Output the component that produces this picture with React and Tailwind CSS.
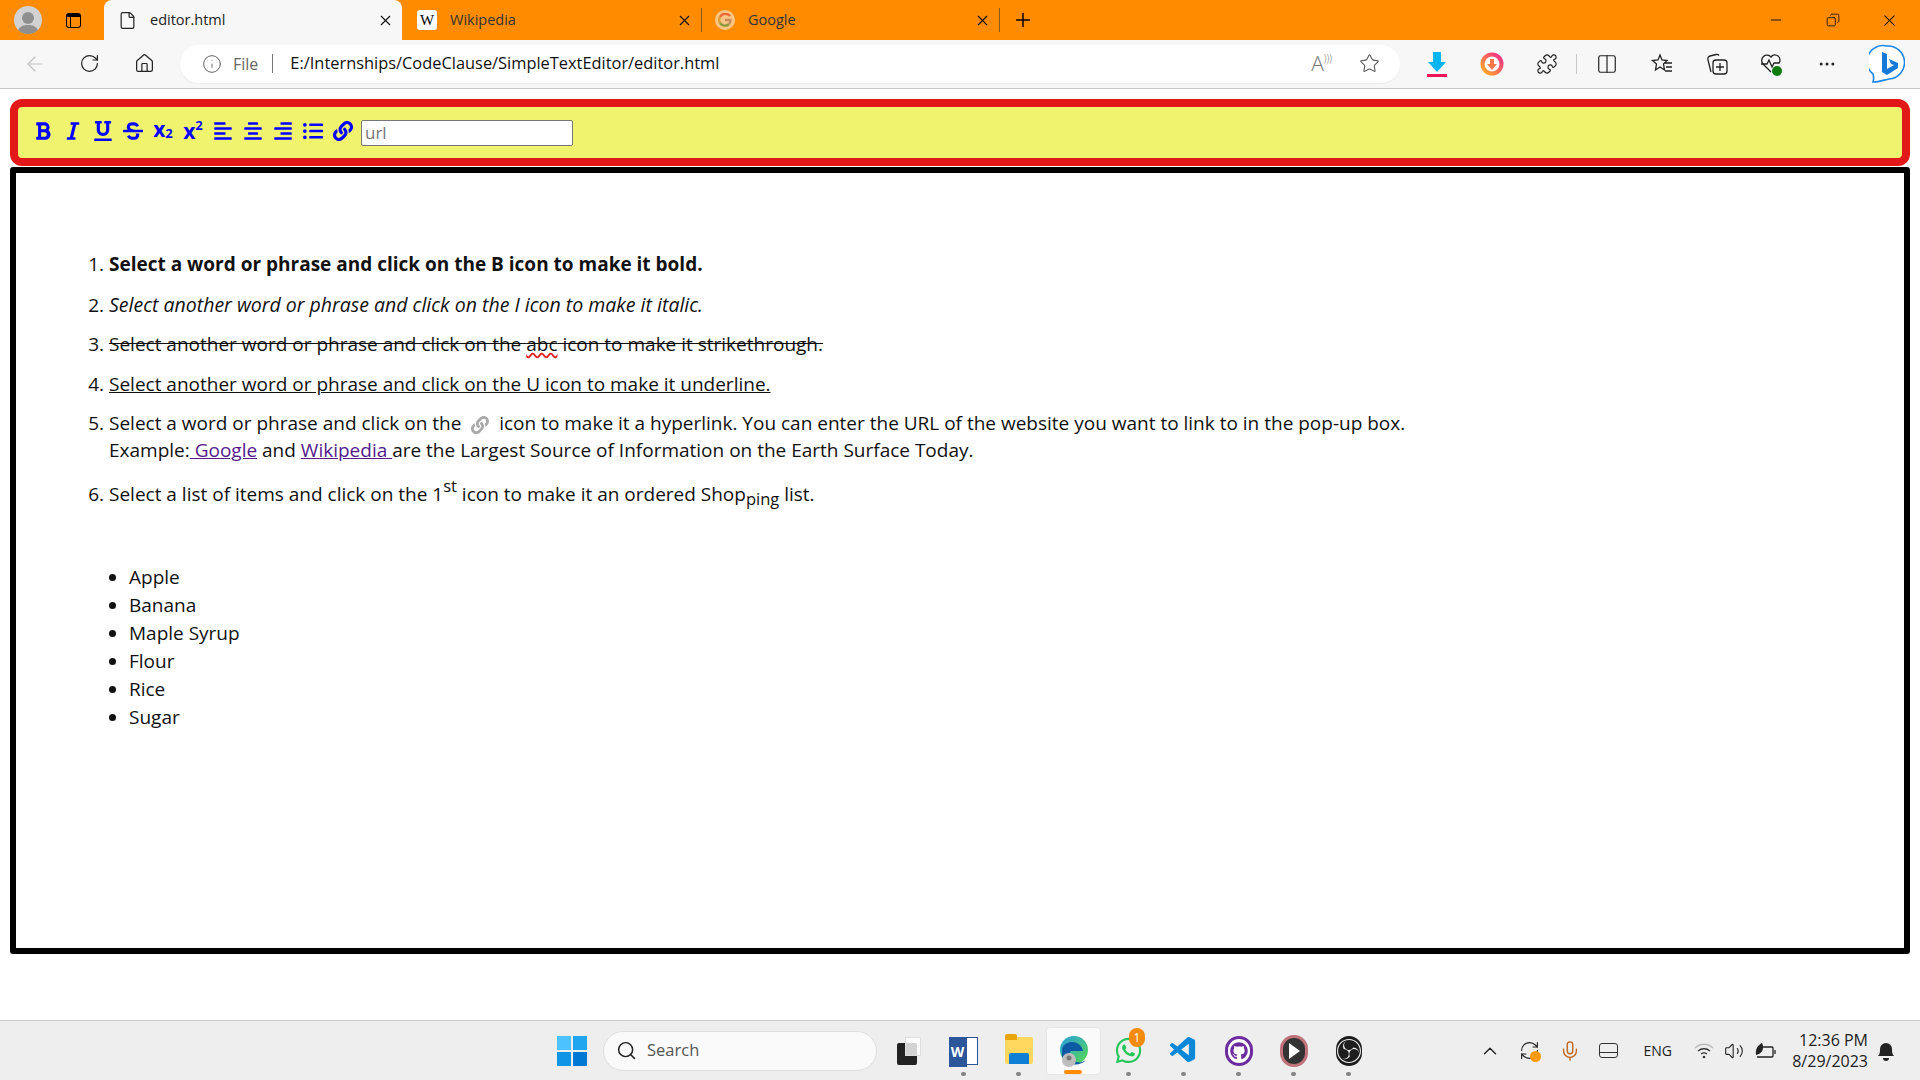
import React from "react";
import {
  FaBold, FaItalic, FaUnderline, FaStrikethrough,
  FaAlignLeft, FaAlignCenter, FaAlignRight, FaListUl, FaLink, FaWhatsapp, FaGithub,
} from "react-icons/fa";
import { SiObsstudio } from "react-icons/si";
import { VscVscode } from "react-icons/vsc";
import {
  ArrowLeft, RotateCw, Home, Info, Star, Puzzle, Columns2, X, Plus, Minus, File, Ellipsis,
  Search, ChevronUp, RefreshCw, Mic, Volume2, Copy,
} from "lucide-react";

const toolsBefore = [FaBold, FaItalic, FaUnderline, FaStrikethrough];
const toolsAfter = [FaAlignLeft, FaAlignCenter, FaAlignRight, FaListUl, FaLink];

function Tab({ icon, title, active, width }) {
  return (
    <div className={`h-full flex items-center pr-[8px] shrink-0 ${width} ${active ? "bg-[#f7f7f7] rounded-t-[8px] text-[#222]" : "text-[#333]"}`}>
      <span className="w-[24px] h-[24px] flex items-center justify-center shrink-0">{icon}</span>
      <span className="ml-[11px] flex-1 text-[14.5px]">{title}</span>
      <X size={17} strokeWidth={1.6} className="text-[#111]" />
    </div>
  );
}

function BarIcon({ children, w = "w-[55px]" }) {
  return <div className={`${w} h-[32px] flex items-center justify-center shrink-0 text-[#222]`}>{children}</div>;
}

function TaskIcon({ children, dot = true, active }) {
  return (
    <div className={`relative w-[55px] h-[48px] flex items-center justify-center shrink-0 rounded-[4px] ${active ? "bg-[#fafafa] border border-[#e6e6e6]" : ""}`}>
      {children}
      {dot && !active && <span className="absolute bottom-[-1px] left-[25px] w-[5px] h-[4px] rounded-full bg-[#858585]" />}
      {active && <span className="absolute bottom-[0px] left-[17px] w-[18px] h-[4px] rounded-full bg-[#ff8c00]" />}
    </div>
  );
}

function Bing() {
  return (
    <svg width="36" height="40" viewBox="0 0 36 40">
      <path d="M18 2a16 16 0 0 1 2 33c-5 1-10 3-16 3 1-3 1-5 0-8A16 16 0 0 1 18 2z" fill="#fff" stroke="#1a86e8" strokeWidth="1.6" />
      <path d="M13 8l5 2v15l7-4-3-1-2-5 9 4v5l-11 7-5-3z" fill="#1479d8" />
    </svg>
  );
}

function WinLogo() {
  return (
    <svg width="30" height="30" viewBox="0 0 30 30">
      <rect x="0" y="0" width="14" height="14" fill="#4cc2ff" />
      <rect x="16" y="0" width="14" height="14" fill="#1fa6ee" />
      <rect x="0" y="16" width="14" height="14" fill="#1094e6" />
      <rect x="16" y="16" width="14" height="14" fill="#0078d4" />
    </svg>
  );
}

function GoogleFav() {
  return (
    <span className="w-[20px] h-[20px] rounded-full bg-[#fbc685] flex items-center justify-center">
      <svg width="14" height="14" viewBox="0 0 14 14" fill="none" strokeWidth="2.4">
        <path d="M12 3A6 6 0 0 0 2 4" stroke="#e8683a" />
        <path d="M2 4a6 6 0 0 0 0 6" stroke="#d9a030" />
        <path d="M2 10a6 6 0 0 0 9 1" stroke="#8d9a3a" />
        <path d="M11 11c1-1 1.500-2.500 1.500-4H7" stroke="#c98a5a" />
      </svg>
    </span>
  );
}

function App() {
  return (
    <div className="w-[1920px] h-[1080px] overflow-hidden bg-white flex flex-col font-['Open_Sans',sans-serif] text-black">
      {/* tab strip */}
      <div className="h-[40px] bg-[#ff8c00] flex items-center shrink-0 pl-[14px]">
        <div className="w-[28px] h-[28px] rounded-full bg-[#d2d2d2] flex flex-col items-center justify-end overflow-hidden shrink-0">
          <span className="w-[12px] h-[12px] rounded-full bg-[#8f8f8f] mb-[1px]" />
          <span className="w-[22px] h-[9px] rounded-t-full bg-[#8f8f8f]" />
        </div>
        <div className="w-[62px] flex justify-center shrink-0">
          <div className="w-[15px] h-[15px] border-[1.5px] border-black rounded-[3px] border-t-[4px] flex bg-[#ff8c00]">
            <span className="w-[4px] border-r-[1.5px] border-black" />
          </div>
        </div>
        <Tab width="w-[298px] pl-[11px]" active title="editor.html" icon={<File size={19} strokeWidth={1.5} />} />
        <Tab
          width="w-[299px] pl-[13px]"
          title="Wikipedia"
          icon={<span className="w-[20px] h-[20px] bg-white rounded-[3px] flex items-center justify-center font-['Liberation_Serif',serif] text-[15px] text-black">W</span>}
        />
        <span className="w-[1px] h-[24px] bg-[#8a5a1e] shrink-0" />
        <Tab width="w-[297px] pl-[11px]" title="Google" icon={<GoogleFav />} />
        <span className="w-[1px] h-[24px] bg-[#8a5a1e] shrink-0" />
        <Plus size={22} strokeWidth={1.6} className="ml-[12px] text-black" />
        <div className="ml-auto flex items-center shrink-0 pr-[2px]">
          <BarIcon w="w-[57px]"><Minus size={16} strokeWidth={1.3} className="text-black" /></BarIcon>
          <BarIcon w="w-[57px]"><Copy size={14} strokeWidth={1.3} className="text-black -scale-x-100" /></BarIcon>
          <BarIcon w="w-[57px]"><X size={19} strokeWidth={1.3} className="text-black" /></BarIcon>
        </div>
      </div>

      {/* address bar */}
      <div className="h-[49px] bg-[#f7f7f7] border-b border-[#c8c8c8] flex items-center shrink-0 pl-[7px] pb-[1px]">
        <BarIcon><ArrowLeft size={24} strokeWidth={1.2} className="text-[#c4c4c4]" /></BarIcon>
        <BarIcon><RotateCw size={21} strokeWidth={1.4} /></BarIcon>
        <BarIcon><Home size={21} strokeWidth={1.4} /></BarIcon>
        <div className="ml-[8px] w-[1220px] h-[38px] bg-white rounded-full flex items-center pl-[22px] pr-[12px] shrink-0 shadow-[0_1px_2px_rgba(0,0,0,0.05)]">
          <Info size={20} strokeWidth={1.2} className="text-[#666]" />
          <span className="ml-[11px] text-[16px] text-[#666]">File</span>
          <span className="ml-[14px] w-[1px] h-[19px] bg-[#777]" />
          <span className="ml-[17px] text-[16.4px] text-[#111]">E:/Internships/CodeClause/SimpleTextEditor/editor.html</span>
          <span className="ml-auto text-[21px] leading-none text-[#777] font-light mr-[27px]">A<span className="text-[10px] align-top">)))</span></span>
          <Star size={21} strokeWidth={1.2} className="text-[#555] mr-[8px]" />
        </div>
        <div className="ml-[9px] flex items-center">
          <BarIcon>
            <svg width="22" height="28" viewBox="0 0 22 28">
              <path d="M7 2h8v10h5l-9 10-9-10h5z" fill="#06b6f2" />
              <rect x="1" y="24" width="20" height="3" fill="#f0145a" />
            </svg>
          </BarIcon>
          <BarIcon>
            <svg width="24" height="24" viewBox="0 0 24 24">
              <defs>
                <linearGradient id="ring" x1="0" y1="1" x2="1" y2="0">
                  <stop offset="0" stopColor="#ffb020" />
                  <stop offset="1" stopColor="#f0288c" />
                </linearGradient>
              </defs>
              <circle cx="12" cy="12" r="9.5" fill="#fff" stroke="url(#ring)" strokeWidth="4" />
              <path d="M10 7h4v5h3l-5 6-5-6h3z" fill="#f4774a" />
            </svg>
          </BarIcon>
          <BarIcon><Puzzle size={22} strokeWidth={1.3} /></BarIcon>
          <span className="w-[1px] h-[20px] bg-[#c8c8c8] mx-[2px]" />
          <BarIcon><Columns2 size={22} strokeWidth={1.3} /></BarIcon>
          <BarIcon>
            <svg width="24" height="24" viewBox="0 0 24 24" fill="none" stroke="#222" strokeWidth="1.3">
              <path d="M10 3l2 5 5 .5-3.5 3.5 1 6-4.5-3-4.500 3 1-6L2.500 8.500 8 8z" />
              <path d="M15 11h7M16 15h6M15 19h7" />
            </svg>
          </BarIcon>
          <BarIcon>
            <svg width="24" height="24" viewBox="0 0 24 24" fill="none" stroke="#222" strokeWidth="1.3">
              <path d="M6 20L3 8a3 3 0 0 1 2-4l6-1.500a3 3 0 0 1 3 1" />
              <rect x="8" y="8" width="14" height="14" rx="3" />
              <path d="M15 11v8M11 15h8" />
            </svg>
          </BarIcon>
          <BarIcon>
            <svg width="26" height="26" viewBox="0 0 26 26" fill="none" stroke="#222" strokeWidth="1.3">
              <path d="M12 21L4 13a5 5 0 0 1 8-7 5 5 0 0 1 9 3c0 1.500-.5 2.500-1 3.500" />
              <path d="M2 13h6l2-4 3 7 2-4h5" />
              <circle cx="18" cy="20" r="5" fill="#107c10" stroke="none" />
            </svg>
          </BarIcon>
          <BarIcon><Ellipsis size={20} strokeWidth={1.6} /></BarIcon>
          <div className="w-[65px] flex justify-center shrink-0"><Bing /></div>
        </div>
      </div>

      {/* page */}
      <div className="flex-1 px-[10px] pt-[10px] flex flex-col">
        <div className="h-[67px] border-[8px] border-[#e21717] rounded-[12px] bg-[#f0f36e] flex items-center pl-[10px] shrink-0">
          <div className="flex items-center h-full pb-[3px]">
            {toolsBefore.map((Tool, i) => (
              <div key={i} className="w-[30px] flex justify-center shrink-0">
                <Tool size={20} color="#0000ff" />
              </div>
            ))}
            <div className="w-[30px] flex justify-center shrink-0 font-bold text-[#0000ff] text-[21px] leading-none mt-[-3px]">
              x<span className="text-[13px] font-bold mt-[8px]">2</span>
            </div>
            <div className="w-[30px] flex justify-center shrink-0 font-bold text-[#0000ff] text-[21px] leading-none">
              x<span className="text-[13px] font-bold mt-[-2px]">2</span>
            </div>
            {toolsAfter.map((Tool, i) => (
              <div key={i} className="w-[30px] flex justify-center shrink-0">
                <Tool size={20} color="#0000ff" />
              </div>
            ))}
          </div>
          <input
            placeholder="url"
            className="ml-[3px] w-[212px] h-[26px] bg-white border border-[#767676] rounded-[2px] px-[3px] text-[17px] placeholder:text-[#757575] outline-none"
          />
        </div>

        <div className="mt-[1px] h-[787px] border-[6px] border-black rounded-[3px] shrink-0 pt-[78px] pl-[93px] text-[19px] leading-[27px] text-[#111]">
          <ol className="list-decimal w-[1440px]">
            <li className="mb-[12.500px]"><span className="font-bold">Select a word or phrase and click on the B icon to make it bold.</span></li>
            <li className="mb-[12.500px]"><span className="italic text-[19.500px]">Select another word or phrase and click on the I icon to make it italic.</span></li>
            <li className="mb-[12.500px]">
              <span className="line-through">
                Select another word or phrase and click on the <span className="underline decoration-wavy decoration-[#e02020]">abc</span> icon to make it strikethrough.
              </span>
            </li>
            <li className="mb-[12.500px]"><span className="underline">Select another word or phrase and click on the U icon to make it underline.</span></li>
            <li className="mb-[16.500px]">
              Select a word or phrase and click on the <FaLink size={18} className="inline mx-[5px] text-[#aaa]" /> icon to make it a hyperlink. You can enter the URL of the website you want to link to in the pop-up box.
              <br />
              Example:<span className="underline text-[#551a8b]"> Google</span> and <span className="underline text-[#551a8b]">Wikipedia </span>are the Largest Source of Information on the Earth Surface Today.
            </li>
            <li>
              Select a list of items and click on the 1<sup className="text-[16.500px]">st</sup> icon to make it an ordered Shop<sub className="text-[16.500px]">ping</sub> list.
            </li>
          </ol>
          <ul className="list-disc mt-[55px] ml-[20px] leading-[28px]">
            <li>Apple</li>
            <li>Banana</li>
            <li>Maple Syrup</li>
            <li>Flour</li>
            <li>Rice</li>
            <li>Sugar</li>
          </ul>
        </div>
      </div>

      {/* taskbar */}
      <div className="h-[60px] bg-[#eeeeee] border-t border-[#c9c9c9] flex items-center shrink-0 pl-[557px] relative">
        <WinLogo />
        <div className="ml-[16px] w-[274px] h-[40px] bg-[#fafafa] rounded-full border border-[#dedede] flex items-center pl-[12px] shrink-0">
          <Search size={21} strokeWidth={1.7} className="text-[#222]" />
          <span className="ml-[10px] text-[16.500px] text-[#555]">Search</span>
        </div>
        <div className="ml-[4px] flex items-center">
          <TaskIcon dot={false}>
            <span className="relative w-[24px] h-[28px]">
              <span className="absolute left-0 bottom-0 w-[20px] h-[22px] bg-[#222] rounded-[2px]" />
              <span className="absolute right-0 top-0 w-[16px] h-[19px] bg-white/80 border border-[#ddd]" />
            </span>
          </TaskIcon>
          <TaskIcon>
            <span className="relative w-[28px] h-[28px] bg-white border border-[#2b579a]">
              <span className="absolute left-[-2px] top-[-1px] w-[18px] h-[30px] bg-[#2b579a] text-white text-[14px] font-bold leading-[30px] text-center">W</span>
            </span>
          </TaskIcon>
          <TaskIcon>
            <span className="relative w-[28px] h-[27px] bg-[#ffd75e] rounded-[2px]">
              <span className="absolute left-0 top-[-3px] w-[12px] h-[6px] bg-[#e8a60c] rounded-t-[2px]" />
              <span className="absolute left-[4px] bottom-0 w-[20px] h-[11px] bg-[#0e7fd4] rounded-t-[2px]" />
            </span>
          </TaskIcon>
          <TaskIcon active>
            <svg width="30" height="32" viewBox="0 0 30 32">
              <defs>
                <linearGradient id="edge" x1="0" y1="0" x2="1" y2="1">
                  <stop offset="0" stopColor="#2a9ee0" />
                  <stop offset="1" stopColor="#57d94d" />
                </linearGradient>
              </defs>
              <circle cx="15" cy="15" r="14" fill="url(#edge)" />
              <path d="M3 14C6 4 22 5 24 16H12c-3 2-2 9 6 11 3 1 6 0 9-2-5 6-18 7-24-3z" fill="#0c59a4" />
              <circle cx="10" cy="25" r="7" fill="#bdbdbd" />
              <circle cx="10" cy="23" r="2.500" fill="#777" />
            </svg>
          </TaskIcon>
          <TaskIcon>
            <span className="relative">
              <FaWhatsapp size={29} color="#25c65a" />
              <span className="absolute left-[15px] top-[-8px] w-[16px] h-[19px] rounded-full bg-[#f58a0b] text-white text-[12px] leading-[19px] text-center">1</span>
            </span>
          </TaskIcon>
          <TaskIcon><VscVscode size={31} color="#0c88d8" /></TaskIcon>
          <TaskIcon>
            <span className="w-[28px] h-[30px] rounded-full border-[3px] border-[#6d2c9e] bg-white flex items-center justify-center">
              <FaGithub size={18} color="#6d2c9e" />
            </span>
          </TaskIcon>
          <TaskIcon>
            <span className="w-[28px] h-[32px] rounded-full border-[3px] border-[#c0727a] bg-[#333] flex items-center justify-center">
              <span className="w-0 h-0 border-y-[8px] border-y-transparent border-l-[11px] border-l-white ml-[2px]" />
            </span>
          </TaskIcon>
          <TaskIcon>
            <span className="w-[26px] h-[30px] rounded-full bg-[#1d1d1d] flex items-center justify-center">
              <SiObsstudio size={24} color="#eeeeee" />
            </span>
          </TaskIcon>
        </div>

        <div className="absolute right-[24px] top-0 h-full flex items-center text-[#222]">
          <ChevronUp size={22} strokeWidth={1.5} />
          <span className="relative ml-[18px]">
            <RefreshCw size={21} strokeWidth={1.3} />
            <span className="absolute right-[-1px] bottom-[-1px] w-[11px] h-[11px] rounded-full bg-[#ff9a0a]" />
          </span>
          <Mic size={22} strokeWidth={1.5} className="ml-[19px] text-[#c0651d]" />
          <span className="ml-[18px] w-[19px] h-[15px] border-[1.5px] border-[#333] rounded-[3px] flex flex-col justify-end">
            <span className="h-[5px] border-t border-[#333]" />
          </span>
          <span className="ml-[26px] text-[14px]">ENG</span>
          <svg width="20" height="18" viewBox="0 0 20 18" fill="none" strokeWidth="1.3" className="ml-[22px]">
            <path d="M1 6c5-5 13-5 18 0" stroke="#bbb" />
            <path d="M4 9c3.500-3 8.500-3 12 0" stroke="#333" />
            <path d="M7 12c2-1.500 4-1.500 6 0" stroke="#333" />
            <circle cx="10" cy="15" r="1.300" fill="#333" stroke="none" />
          </svg>
          <Volume2 size={20} strokeWidth={1.3} className="ml-[10px]" />
          <svg width="22" height="18" viewBox="0 0 22 18" fill="none" stroke="#222" strokeWidth="1.3" className="ml-[10px]">
            <path d="M6 5h12a1 1 0 0 1 1 1v8a1 1 0 0 1-1 1H3" />
            <path d="M21 8v4" />
            <path d="M2 13C1 7 4 3 8 1c2 4 1 9-3 11z" fill="#222" stroke="none" />
          </svg>
          <div className="ml-[14px] w-[78px] text-right text-[16px] leading-[21px] shrink-0">
            <div>12:36 PM</div>
            <div>8/29/2023</div>
          </div>
          <svg width="20" height="22" viewBox="0 0 20 22" className="ml-[8px]">
            <path d="M2 16c2-2 2-4 2-7a6 6 0 0 1 12 0c0 3 0 5 2 7z" fill="#222" />
            <path d="M7 18h6a3 3 0 0 1-6 0z" fill="#222" />
          </svg>
        </div>
      </div>
    </div>
  );
}

export default App;
